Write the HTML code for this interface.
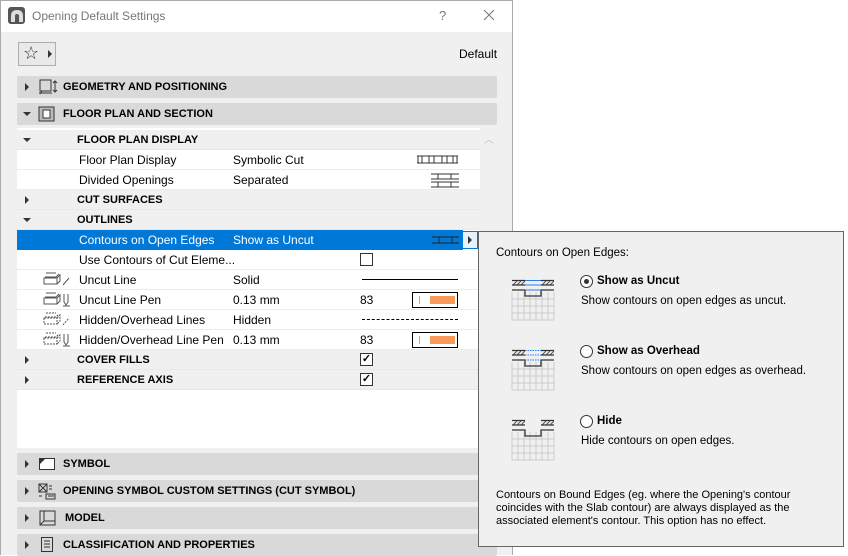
<!DOCTYPE html>
<html><head><meta charset="utf-8"><style>
*{margin:0;padding:0;box-sizing:border-box}
body{width:848px;height:555px;background:#fff;position:relative;overflow:hidden;font-family:"Liberation Sans",sans-serif;font-size:12px;color:#000}
.a{position:absolute}
.dlg{left:0;top:0;width:513px;height:555px;background:#f0f0f0;border-left:1px solid #aaa;border-right:1px solid #aaa;border-top:1px solid #aaa}
.title{left:1px;top:1px;width:511px;height:31px;background:#fff}
.sec{left:17px;width:480px;height:22px;background:#d9d9d9;border-radius:2px;font-weight:bold;font-size:11px;line-height:22px}
.row{left:17px;width:463px;height:20px;line-height:20px;background:#fff;border-bottom:1px solid #ececec}
.hdr{background:#f0f0f0;font-weight:bold;font-size:11px;border-bottom:1px solid #e8e8e8}
.tri{position:absolute;width:0;height:0;border-top:4px solid transparent;border-bottom:4px solid transparent;border-left:4px solid #333}
.trd{position:absolute;width:0;height:0;border-left:4px solid transparent;border-right:4px solid transparent;border-top:4px solid #333}
.cb{position:absolute;width:13px;height:13px;border:1px solid #333;background:#fff}
.pen{position:absolute;width:46px;height:16px;border:1px solid #000;background:#fff}
.pen i{position:absolute;left:17px;top:3px;width:25px;height:8px;background:#f79a5c}
.pen b{position:absolute;left:6px;top:3px;width:1px;height:8px;background:#f79a5c}
.pop{left:478px;top:231px;width:366px;height:316px;background:#f0f0f0;border:1px solid #666;font-size:11.5px}
.rad{position:absolute;width:13px;height:13px;border:1px solid #333;border-radius:50%;background:#fff}
</style></head><body>
<div class="a dlg"></div>
<div class="a title"></div>
<svg class="a" style="left:8px;top:7px" width="17" height="17"><rect x="0" y="0" width="17" height="17" rx="3" fill="#555"/><path d="M3 15 V9 Q3 3 9 3 Q15 3 15 9 V15 H11 V9 Q11 7 9 7 Q7 7 7 9 V15Z" fill="#ddd"/></svg>
<div class="a" style="left:32px;top:9px;color:#777;font-size:12px">Opening Default Settings</div>
<div class="a" style="left:439px;top:8px;color:#777;font-size:13px">?</div>
<svg class="a" style="left:483px;top:9px" width="12" height="12"><path d="M1 1 L11 11 M11 1 L1 11" stroke="#777" stroke-width="1"/></svg>
<div class="a" style="left:18px;top:42px;width:38px;height:24px;border:1px solid #adadad;background:#e9e9e9"></div>
<div class="a" style="left:23px;top:42px;font-size:18px;line-height:22px;color:#333">☆</div>
<div class="tri" style="left:48px;top:50px"></div>
<div class="a" style="left:459px;top:47px">Default</div>

<div class="a sec" style="top:76px"><div class="tri" style="left:8px;top:7px"></div><svg class="a" style="left:21px;top:3px" width="22" height="16"><rect x="2" y="1" width="11" height="11" fill="none" stroke="#333"/><path d="M1 14 H14 M4 12 L2 15 M17 2 V13 M15 4 L17 2 19 4 M15 11 L17 13 19 11" stroke="#333" fill="none"/></svg><span class="a" style="left:46px">GEOMETRY AND POSITIONING</span></div>
<div class="a sec" style="top:103px"><div class="trd" style="left:6px;top:9px"></div><svg class="a" style="left:21px;top:3px" width="18" height="16"><rect x="1" y="1" width="15" height="14" fill="#bbb" stroke="#333"/><rect x="5" y="4" width="7" height="8" fill="#fff" stroke="#333"/></svg><span class="a" style="left:46px">FLOOR PLAN AND SECTION</span></div>

<div class="a" style="left:480px;top:128px;width:17px;height:320px;background:#f0f0f0"></div>
<div class="a" style="left:484px;top:131px;color:#bbb;font-size:10px">︿</div>
<div class="a" style="left:17px;top:128px;width:463px;height:320px;background:#fff"></div>

<div class="a row hdr" style="top:130px"><div class="trd" style="left:6px;top:8px"></div><span class="a" style="left:60px">FLOOR PLAN DISPLAY</span></div>
<div class="a row" style="top:150px"><span class="a" style="left:62px">Floor Plan Display</span><span class="a" style="left:216px">Symbolic Cut</span>
<svg class="a" style="left:400px;top:5px" width="42" height="10"><path d="M0 1 H41 M0 8 H41 M1 1 V8 M12 1 V8 M25 1 V8 M40 1 V8 M5 1 V8 M17 1 V8 M30 1 V8 M36 1 V8" stroke="#333" fill="none"/></svg></div>
<div class="a row" style="top:170px"><span class="a" style="left:62px">Divided Openings</span><span class="a" style="left:216px">Separated</span>
<svg class="a" style="left:414px;top:3px" width="28" height="15"><path d="M0 1 H28 M0 6 H28 M0 9 H28 M0 14 H28 M7 1 V6 M20 1 V6 M7 9 V14 M20 9 V14" stroke="#333" fill="none"/></svg></div>
<div class="a row hdr" style="top:190px"><div class="tri" style="left:8px;top:6px"></div><span class="a" style="left:60px">CUT SURFACES</span></div>
<div class="a row hdr" style="top:210px"><div class="trd" style="left:6px;top:8px"></div><span class="a" style="left:60px">OUTLINES</span></div>
<div class="a" style="left:17px;top:230px;width:446px;height:20px;background:#0078d7;color:#fff;line-height:20px"><span class="a" style="left:62px">Contours on Open Edges</span><span class="a" style="left:216px">Show as Uncut</span>
<svg class="a" style="left:415px;top:6px" width="28" height="8"><path d="M0 1 H27 M0 7 H27 M7 1 V7 M20 1 V7" stroke="#222" fill="none"/></svg></div>
<div class="a" style="left:462px;top:231px;width:16px;height:18px;border:1px solid #0078d7;background:#e5f1fb"><div class="tri" style="left:5px;top:4px"></div></div>
<div class="a row" style="top:250px"><span class="a" style="left:62px">Use Contours of Cut Eleme...</span><div class="cb" style="left:343px;top:3px"></div></div>
<div class="a row" style="top:270px"><svg class="a" style="left:26px;top:2px" width="28" height="16"><path d="M3 1 H13 M2 5 H13 L16 2 M1 6 H14 V12 H1Z M14 6 L17 3 V9 L14 12 M20 13 L26 6" stroke="#555" fill="none"/></svg><span class="a" style="left:62px">Uncut Line</span><span class="a" style="left:216px">Solid</span><div class="a" style="left:345px;top:9px;width:96px;height:1px;background:#000"></div></div>
<div class="a row" style="top:290px"><svg class="a" style="left:26px;top:2px" width="28" height="16"><path d="M3 1 H13 M2 5 H13 L16 2 M1 6 H14 V12 H1Z M14 6 L17 3 V9 L14 12 M21 2 V10 L23 13 25 10 V2 M20 14 H27" stroke="#555" fill="none"/></svg><span class="a" style="left:62px">Uncut Line Pen</span><span class="a" style="left:216px">0.13 mm</span><span class="a" style="left:343px">83</span><div class="pen" style="left:395px;top:2px"><b></b><i></i></div></div>
<div class="a row" style="top:310px"><svg class="a" style="left:26px;top:2px" width="28" height="16"><path d="M3 1 H13 M2 5 H13 L16 2 M1 6 H14 V12 H1Z M14 6 L17 3 V9 L14 12 M20 13 L26 6" stroke="#555" stroke-dasharray="2 1" fill="none"/></svg><span class="a" style="left:62px">Hidden/Overhead Lines</span><span class="a" style="left:216px">Hidden</span><div class="a" style="left:345px;top:9px;width:96px;height:0;border-top:1px dashed #000"></div></div>
<div class="a row" style="top:330px"><svg class="a" style="left:26px;top:2px" width="28" height="16"><path d="M3 1 H13 M2 5 H13 L16 2 M1 6 H14 V12 H1Z M14 6 L17 3 V9 L14 12" stroke="#555" stroke-dasharray="2 1" fill="none"/><path d="M21 2 V10 L23 13 25 10 V2 M20 14 H27" stroke="#555" fill="none"/></svg><span class="a" style="left:62px">Hidden/Overhead Line Pen</span><span class="a" style="left:216px">0.13 mm</span><span class="a" style="left:343px">83</span><div class="pen" style="left:395px;top:2px"><b></b><i></i></div></div>
<div class="a row hdr" style="top:350px"><div class="tri" style="left:8px;top:6px"></div><span class="a" style="left:60px">COVER FILLS</span><div class="cb" style="left:343px;top:3px;font-size:11px;line-height:11px;text-align:center">✓</div></div>
<div class="a row hdr" style="top:370px"><div class="tri" style="left:8px;top:6px"></div><span class="a" style="left:60px">REFERENCE AXIS</span><div class="cb" style="left:343px;top:3px;font-size:11px;line-height:11px;text-align:center">✓</div></div>

<div class="a sec" style="top:453px"><div class="tri" style="left:8px;top:7px"></div><svg class="a" style="left:22px;top:5px" width="16" height="12"><rect x="0.5" y="0.5" width="15" height="11" fill="#fff" stroke="#333"/><path d="M1 1 L6 1 1 6Z" fill="#333"/></svg><span class="a" style="left:46px">SYMBOL</span></div>
<div class="a sec" style="top:480px"><div class="tri" style="left:8px;top:7px"></div><svg class="a" style="left:21px;top:3px" width="18" height="17"><rect x="1" y="1" width="8" height="8" fill="none" stroke="#333"/><path d="M1 1 L9 9 M9 1 L1 9 M11 3 H14 M11 6 H14 M1 13 H4 M8 11 H17 V16 H8Z M10 13 H16" stroke="#333" fill="none"/></svg><span class="a" style="left:46px">OPENING SYMBOL CUSTOM SETTINGS (CUT SYMBOL)</span></div>
<div class="a sec" style="top:507px"><div class="tri" style="left:8px;top:7px"></div><svg class="a" style="left:22px;top:3px" width="18" height="17"><path d="M1 1 H16 V15 H1Z M5 1 V11 L1 15 M5 11 H16" stroke="#333" fill="none"/></svg><span class="a" style="left:48px">MODEL</span></div>
<div class="a sec" style="top:534px"><div class="tri" style="left:8px;top:7px"></div><svg class="a" style="left:24px;top:3px" width="12" height="16"><rect x="0.5" y="0.5" width="11" height="14" fill="none" stroke="#333"/><path d="M3 4 H9 M3 7 H9 M3 10 H9" stroke="#333"/></svg><span class="a" style="left:46px">CLASSIFICATION AND PROPERTIES</span></div>

<div class="a pop">
<div class="a" style="left:17px;top:15px">Contours on Open Edges:</div>
<svg class="a" style="left:30px;top:47px" width="48" height="42"><g stroke="#ccc"><path d="M3 13 V41 M9 13 V41 M15 13 V41 M21 13 V41 M27 13 V41 M33 13 V41 M39 13 V41 M45 13 V41 M3 20 H45 M3 27 H45 M3 34 H45 M3 41 H45"/></g><path d="M4 6 L8 2 M8 6 L12 2 M12 6 L16 2 M33 6 L37 2 M37 6 L41 2 M41 6 L45 2" stroke="#555"/><path d="M3 1.5 H16 M32 1.5 H45 M3 6 H16 M32 6 H45 M3 11 H16 V17 H32 V11 H45" stroke="#333" fill="none" stroke-width="1.3"/><path d="M16 1.5 H32 M16 6 H32 M16 11 H32" stroke="#2b7de9"/></svg>
<div class="rad" style="left:101px;top:43px"><div class="a" style="left:3px;top:3px;width:5px;height:5px;border-radius:50%;background:#333"></div></div>
<div class="a" style="left:118px;top:43px;font-weight:bold">Show as Uncut</div>
<div class="a" style="left:102px;top:63px">Show contours on open edges as uncut.</div>
<svg class="a" style="left:30px;top:117px" width="48" height="42"><g stroke="#ccc"><path d="M3 13 V41 M9 13 V41 M15 13 V41 M21 13 V41 M27 13 V41 M33 13 V41 M39 13 V41 M45 13 V41 M3 20 H45 M3 27 H45 M3 34 H45 M3 41 H45"/></g><path d="M4 6 L8 2 M8 6 L12 2 M12 6 L16 2 M33 6 L37 2 M37 6 L41 2 M41 6 L45 2" stroke="#555"/><path d="M3 1.5 H16 M32 1.5 H45 M3 6 H16 M32 6 H45 M3 11 H16 V17 H32 V11 H45" stroke="#333" fill="none" stroke-width="1.3"/><path d="M16 1.5 H32 M16 6 H32 M16 11 H32" stroke="#2b7de9" stroke-dasharray="1.5 1"/></svg>
<div class="rad" style="left:101px;top:113px"></div>
<div class="a" style="left:118px;top:113px;font-weight:bold">Show as Overhead</div>
<div class="a" style="left:102px;top:133px">Show contours on open edges as overhead.</div>
<svg class="a" style="left:30px;top:187px" width="48" height="42"><g stroke="#ccc"><path d="M3 13 V41 M9 13 V41 M15 13 V41 M21 13 V41 M27 13 V41 M33 13 V41 M39 13 V41 M45 13 V41 M3 20 H45 M3 27 H45 M3 34 H45 M3 41 H45"/></g><path d="M4 6 L8 2 M8 6 L12 2 M12 6 L16 2 M33 6 L37 2 M37 6 L41 2 M41 6 L45 2" stroke="#555"/><path d="M3 1.5 H16 M32 1.5 H45 M3 6 H16 M32 6 H45 M3 11 H16 V17 H32 V11 H45" stroke="#333" fill="none" stroke-width="1.3"/></svg>
<div class="rad" style="left:101px;top:183px"></div>
<div class="a" style="left:118px;top:183px;font-weight:bold">Hide</div>
<div class="a" style="left:102px;top:203px">Hide contours on open edges.</div>
<div class="a" style="left:17px;top:257px;width:340px;font-size:11px;line-height:13px">Contours on Bound Edges (eg. where the Opening's contour coincides with the Slab contour) are always displayed as the associated element's contour. This option has no effect.</div>
</div>
</body></html>
